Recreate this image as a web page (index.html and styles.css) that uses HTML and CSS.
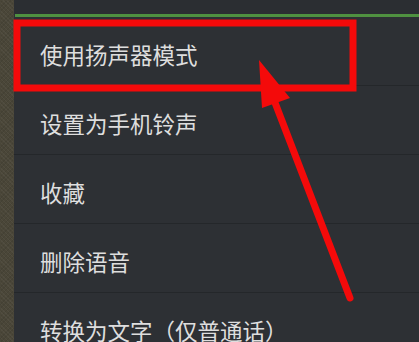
FILE: index.html
```html
<!DOCTYPE html>
<html lang="zh-CN">
<head>
<meta charset="utf-8">
<title>菜单</title>
<link rel="stylesheet" href="styles.css">
</head>
<body>
<div class="screen">
  <div class="wallpaper"></div>
  <div class="panel">
    <div class="top"></div>
    <div class="accent"></div>
    <ul class="menu">
      <li class="item">使用扬声器模式</li>
      <li class="item">设置为手机铃声</li>
      <li class="item">收藏</li>
      <li class="item">删除语音</li>
      <li class="item">转换为文字<span class="paren">（</span>仅普通话<span class="paren">）</span></li>
    </ul>
  </div>
  <svg class="annotation" width="419" height="342" viewBox="0 0 419 342" aria-hidden="true">
    <rect x="17" y="23" width="336" height="65" fill="none" stroke="#f40a0a" stroke-width="7"/>
    <line x1="350" y1="298" x2="274" y2="100" stroke="#f40a0a" stroke-width="7" stroke-linecap="round"/>
    <polygon points="259,60 290,98 262,108" fill="#f40a0a"/>
  </svg>
</div>
</body>
</html>
```

FILE: styles.css
```css
html, body {
  margin: 0;
  padding: 0;
  background: #2d3034;
}

.screen {
  position: relative;
  width: 419px;
  height: 342px;
  overflow: hidden;
  display: flex;
}

.wallpaper {
  width: 14px;
  flex: 0 0 14px;
  background:
    repeating-linear-gradient(45deg, rgba(255,255,255,0.04) 0 1px, transparent 1px 3px),
    repeating-linear-gradient(-45deg, rgba(0,0,0,0.08) 0 1px, transparent 1px 3px),
    #4a4638;
}

.panel {
  flex: 1;
  display: flex;
  flex-direction: column;
  background: #2d3034;
}

.top {
  flex: 0 0 14px;
  background: #2b2e32;
}

.accent {
  flex: 0 0 3px;
  background: #4f9140;
  margin-left: 1px;
}

.menu {
  flex: 0 0 auto;
  list-style: none;
  margin: 0;
  padding: 0;
}

.item {
  box-sizing: border-box;
  height: 69px;
  padding: 26px 0 0 26px;
  border-bottom: 1px solid #24272a;
  font-family: "Noto Sans CJK SC", "Noto Sans", sans-serif;
  font-size: 22.5px;
  line-height: 22px;
  color: #dedede;
  white-space: nowrap;
}

.paren {
  display: inline-block;
  width: 1em;
  text-align: center;
}

.annotation {
  position: absolute;
  left: 0;
  top: 0;
  pointer-events: none;
}
```
